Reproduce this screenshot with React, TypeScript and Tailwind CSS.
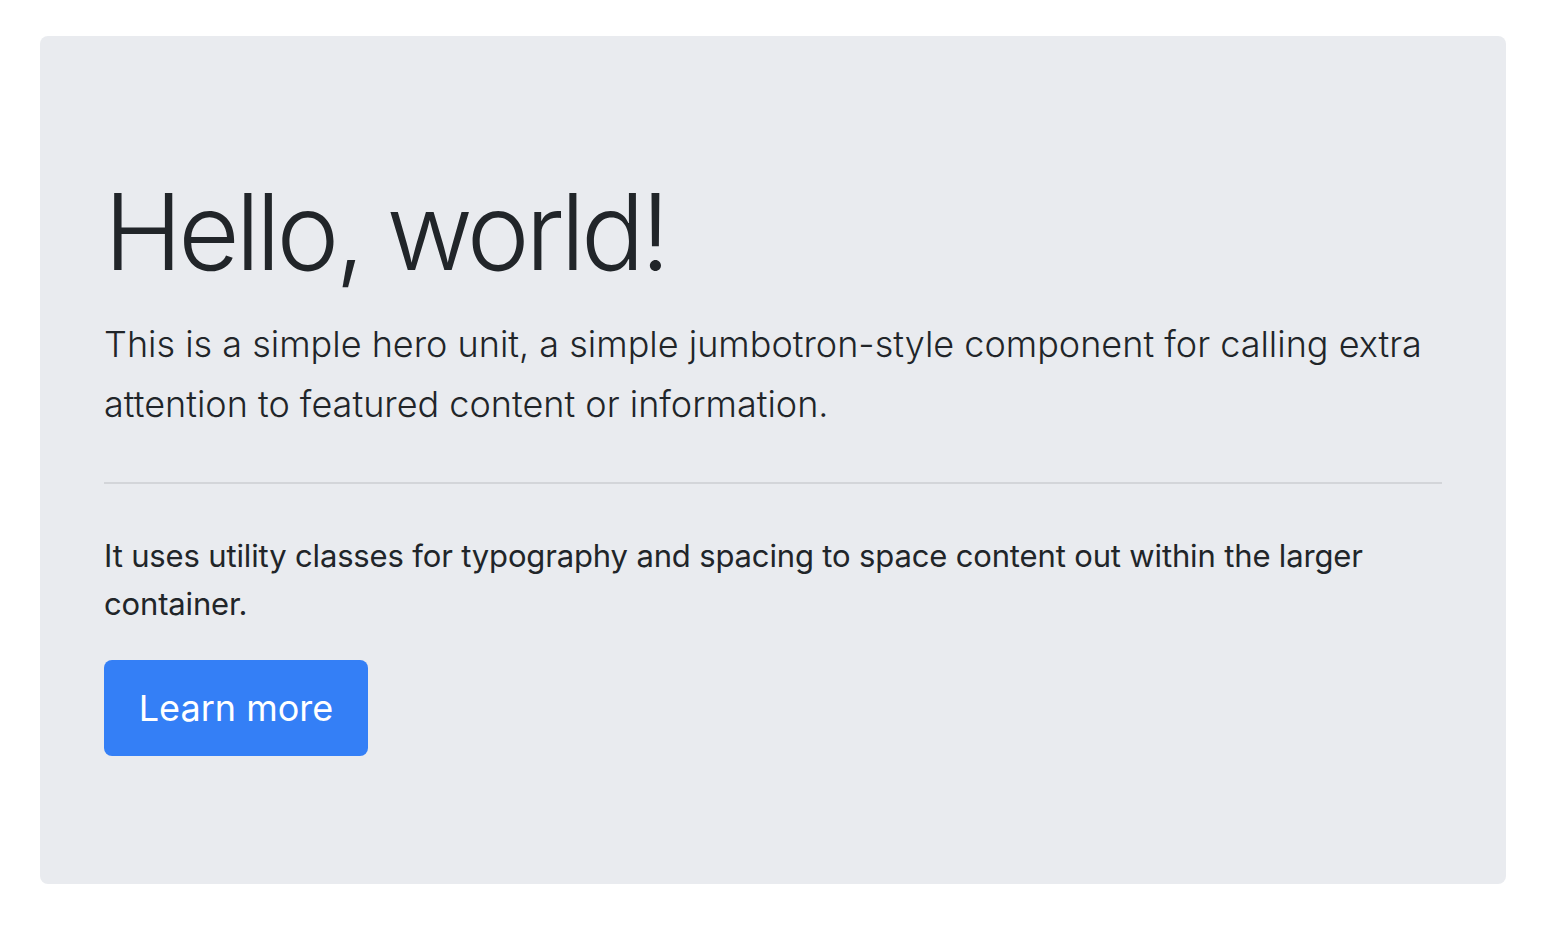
import React from 'react';

const App: React.FC = () => {
  return (
    <div className="min-h-[936px] bg-white pt-[36px] pl-[40px] text-[#212529]" style={{ fontFamily: 'Inter, "Noto Sans", sans-serif' }}>
      <div className="w-[1466px] rounded-[8px] bg-[#e9ebef] px-[64px] py-[128px]">
        <h1 className="mb-[16px] h-[134px] text-[106px] font-light leading-[136px] tracking-[-4.2px]">Hello, world!</h1>
        <p className="text-[36px] font-light leading-[60px]">
          This is a simple hero unit, a simple jumbotron-style component for calling extra attention to featured content or information.
        </p>
        <hr className="my-[48px] border-t-2 border-[#d3d5d9]" />
        <p className="mb-[32px] text-[31px] leading-[48px] tracking-[-0.15px]">
          It uses utility classes for typography and spacing to space content out within the larger container.
        </p>
        <button className="h-[96px] w-[264px] rounded-[8px] bg-[#347ff6] text-[36px] text-white">
          Learn more
        </button>
      </div>
    </div>
  );
};

export default App;
